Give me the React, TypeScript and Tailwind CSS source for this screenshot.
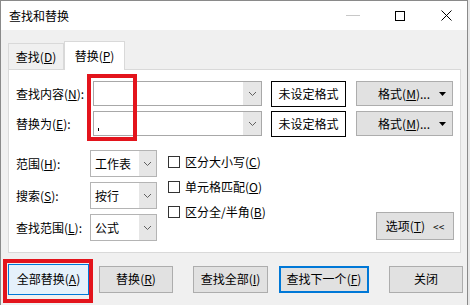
import React from "react";

const FONT = { fontFamily: '"Noto Sans CJK SC", "Noto Sans", sans-serif' };

// 下拉小箭头
const Chevron: React.FC = () => (
  <svg width="9" height="6" viewBox="0 0 9 6">
    <polyline points="1,1 4.5,4.5 8,1" fill="none" stroke="#606060" strokeWidth="1" />
  </svg>
);

// 组合框（查找内容 / 替换为）
const ComboInput: React.FC<{ caret?: boolean }> = ({ caret }) => (
  <div className="flex h-[25px] w-[169px] border border-[#a8a8a8] bg-white">
    <div className="relative flex-1">
      {caret && <div className="absolute left-[4px] top-[16px] h-[3px] w-px bg-black" />}
    </div>
    <div className="flex w-[18px] items-center justify-center bg-[#e6e6e6]">
      <Chevron />
    </div>
  </div>
);

const Select: React.FC<{ value: string }> = ({ value }) => (
  <div className="flex h-[27px] w-[67px] border border-[#b4b4b4] bg-white">
    <div className="flex flex-1 items-center pl-[4px] text-[12px] text-black">{value}</div>
    <div className="flex w-[17px] items-center justify-center bg-[#e6e6e6]">
      <Chevron />
    </div>
  </div>
);

const Checkbox: React.FC<{ label: string; k: string }> = ({ label, k }) => (
  <div className="flex h-[25px] items-center text-[12px] text-black">
    <div className="mr-[5px] h-[12px] w-[12px] border border-[#333] bg-white" />
    <span>
      {label}(<u>{k}</u>)
    </span>
  </div>
);

const Mn: React.FC<{ t: string; k: string; tail?: string }> = ({ t, k, tail = "" }) => (
  <span>
    {t}(<u>{k}</u>){tail}
  </span>
);

const FormatRow: React.FC<{ label: string; k: string; caret?: boolean }> = ({ label, k, caret }) => (
  <div className="flex h-[25px] items-center">
    <div className="w-[77px] text-[12px] text-black">
      <Mn t={label} k={k} tail=":" />
    </div>
    <ComboInput caret={caret} />
    <div className="ml-[9px] flex h-[26px] w-[75px] items-center justify-center border border-black bg-white text-[12px] text-black">
      未设定格式
    </div>
    <div className="ml-[10px] flex h-[25px] w-[97px] items-center justify-end border border-[#adadad] bg-[#e1e1e1] pr-[6px] text-[12px] text-black">
      <Mn t="格式" k="M" tail="..." />
      <svg className="ml-[9px]" width="7" height="4" viewBox="0 0 7 4">
        <polygon points="0,0 7,0 3.5,4" fill="#000" />
      </svg>
    </div>
  </div>
);

const Btn: React.FC<{ w: string; children: React.ReactNode; variant?: "default" | "focus" | "plain" }> = ({
  w,
  children,
  variant = "plain",
}) => {
  const cls =
    variant === "default"
      ? "h-[31px] border border-[#0078d7] bg-[#e5f1fb]"
      : variant === "focus"
        ? "h-[27px] border-2 border-[#0078d7] bg-[#e1e1e1]"
        : "h-[27px] border border-[#adadad] bg-[#e1e1e1]";
  return (
    <div className={`flex items-center justify-center text-[12px] text-black ${cls} ${w}`}>{children}</div>
  );
};

export default function App() {
  return (
    <div className="relative h-[305px] w-[470px] overflow-hidden bg-[#e8e8e8]" style={FONT}>
      <div className="flex h-[305px] w-[468px] flex-col border-l border-r border-t border-[#8a8a8a] bg-[#f0f0f0]">
        {/* 标题栏 */}
        <div className="flex h-[29px] items-center bg-white pl-[8px]">
          <span className="text-[12px] text-black">查找和替换</span>
          <div className="ml-auto flex items-center">
            <div className="h-px w-[14px] bg-[#c8c8c8]" />
            <div className="ml-[35px] h-[10px] w-[10px] border border-black" />
            <svg className="ml-[36px] mr-[15px]" width="11" height="11" viewBox="0 0 11 11">
              <path d="M0.5 0.5 L10.5 10.5 M10.5 0.5 L0.5 10.5" stroke="#000" strokeWidth="1" />
            </svg>
          </div>
        </div>

        {/* 标签页 */}
        <div className="flex h-[39px] items-end pl-[7px] pt-[10px]">
          <div className="flex h-[26px] w-[56px] items-center justify-center border border-b-0 border-[#d9d9d9] bg-[#f0f0f0] text-[12px] text-black">
            <Mn t="查找" k="D" />
          </div>
          <div className="relative top-px z-10 flex h-[29px] w-[61px] items-center justify-center border border-b-0 border-[#d9d9d9] bg-white text-[12px] text-black">
            <Mn t="替换" k="P" />
          </div>
        </div>

        {/* 面板 */}
        <div className="ml-[7px] flex h-[184px] w-[453px] flex-col border border-[#d9d9d9] bg-white pl-[7px] pr-[6px] pt-[11px]">
          <FormatRow label="查找内容" k="N" />
          <div className="mt-[5px]">
            <FormatRow label="替换为" k="E" caret />
          </div>

          <div className="mt-[14px] flex">
            <div className="flex flex-col gap-[5px]">
              {[
                ["范围", "H", "工作表"],
                ["搜索", "S", "按行"],
                ["查找范围", "L", "公式"],
              ].map(([l, k, v]) => (
                <div key={k} className="flex items-center">
                  <div className="w-[74px] text-[12px] text-black">
                    <Mn t={l} k={k} tail=":" />
                  </div>
                  <Select value={v} />
                </div>
              ))}
            </div>
            <div className="-mt-px ml-[11px] flex flex-col">
              <Checkbox label="区分大小写" k="C" />
              <Checkbox label="单元格匹配" k="O" />
              <Checkbox label="区分全/半角" k="B" />
            </div>
            <div className="ml-auto flex items-end pb-px">
              <div className="flex h-[28px] w-[78px] items-center justify-center gap-[8px] border border-[#adadad] bg-[#e1e1e1] text-[12px] text-black">
                <Mn t="选项" k="T" />
                <span className="text-[10px]">&lt;&lt;</span>
              </div>
            </div>
          </div>
        </div>

        {/* 底部按钮 */}
        <div className="flex flex-1 items-center pl-[7px]">
          <Btn w="w-[81px]" variant="default">
            <Mn t="全部替换" k="A" />
          </Btn>
          <div className="ml-[10px]">
            <Btn w="w-[74px]">
              <Mn t="替换" k="R" />
            </Btn>
          </div>
          <div className="ml-[20px]">
            <Btn w="w-[75px]">
              <Mn t="查找全部" k="I" />
            </Btn>
          </div>
          <div className="ml-[11px]">
            <Btn w="w-[90px]" variant="focus">
              <Mn t="查找下一个" k="F" />
            </Btn>
          </div>
          <div className="ml-[20px]">
            <Btn w="w-[74px]">关闭</Btn>
          </div>
        </div>
      </div>

      {/* 红色标注框 */}
      <div className="absolute left-[87px] top-[74px] h-[67px] w-[50px] border-4 border-[#e3141c]" />
      <div className="absolute left-[3px] top-[259px] h-[44px] w-[90px] border-4 border-[#e3141c]" />
    </div>
  );
}
